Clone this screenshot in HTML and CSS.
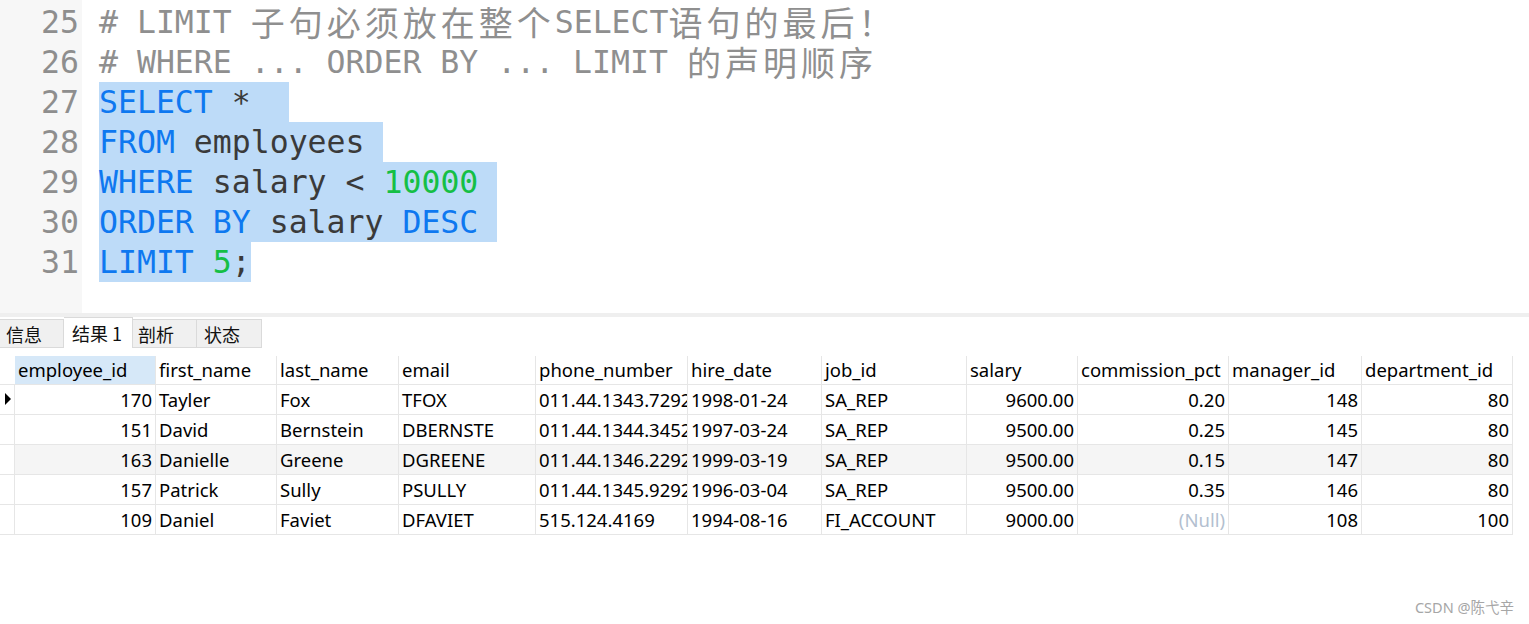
FILE: index.html
```html
<!DOCTYPE html>
<html lang="zh">
<head>
<meta charset="utf-8">
<title>Query result</title>
<link rel="stylesheet" href="styles.css">
</head>
<body>
<div class="page">
  <div class="editor">
    <div class="gutter">
      <div class="ln">25</div>
      <div class="ln">26</div>
      <div class="ln">27</div>
      <div class="ln">28</div>
      <div class="ln">29</div>
      <div class="ln">30</div>
      <div class="ln">31</div>
    </div>
    <div class="code">
      <div class="line cm"># LIMIT <span class="cjk">子句必须放在整个</span>SELECT<span class="cjk">语句的最后！</span></div>
      <div class="line cm"># WHERE ... ORDER BY ... LIMIT <span class="cjk">的声明顺序</span></div>
      <div class="line"><span class="sel"><span class="kw">SELECT</span> *  </span></div>
      <div class="line"><span class="sel"><span class="kw">FROM</span> employees </span></div>
      <div class="line"><span class="sel"><span class="kw">WHERE</span> salary &lt; <span class="num">10000</span> </span></div>
      <div class="line"><span class="sel"><span class="kw">ORDER BY</span> salary <span class="kw">DESC</span> </span></div>
      <div class="line"><span class="sel"><span class="kw">LIMIT</span> <span class="num">5</span>;</span></div>
    </div>
  </div>
  <div class="divider"></div>
  <div class="tabs">
    <div class="tab">信息</div>
    <div class="tab active">结果 1</div>
    <div class="tab">剖析</div>
    <div class="tab">状态</div>
  </div>
  <div class="grid">
    <div class="c g h"></div>
    <div class="c h sorted">employee_id</div>
    <div class="c h">first_name</div>
    <div class="c h">last_name</div>
    <div class="c h">email</div>
    <div class="c h">phone_number</div>
    <div class="c h">hire_date</div>
    <div class="c h">job_id</div>
    <div class="c h">salary</div>
    <div class="c h">commission_pct</div>
    <div class="c h">manager_id</div>
    <div class="c h">department_id</div>

    <div class="c g"><span class="arrow"></span></div>
    <div class="c r">170</div>
    <div class="c">Tayler</div>
    <div class="c">Fox</div>
    <div class="c">TFOX</div>
    <div class="c">011.44.1343.729268</div>
    <div class="c">1998-01-24</div>
    <div class="c">SA_REP</div>
    <div class="c r">9600.00</div>
    <div class="c r">0.20</div>
    <div class="c r">148</div>
    <div class="c r">80</div>

    <div class="c g"></div>
    <div class="c r">151</div>
    <div class="c">David</div>
    <div class="c">Bernstein</div>
    <div class="c">DBERNSTE</div>
    <div class="c">011.44.1344.345268</div>
    <div class="c">1997-03-24</div>
    <div class="c">SA_REP</div>
    <div class="c r">9500.00</div>
    <div class="c r">0.25</div>
    <div class="c r">145</div>
    <div class="c r">80</div>

    <div class="c g"></div>
    <div class="c r alt">163</div>
    <div class="c alt">Danielle</div>
    <div class="c alt">Greene</div>
    <div class="c alt">DGREENE</div>
    <div class="c alt">011.44.1346.229268</div>
    <div class="c alt">1999-03-19</div>
    <div class="c alt">SA_REP</div>
    <div class="c r alt">9500.00</div>
    <div class="c r alt">0.15</div>
    <div class="c r alt">147</div>
    <div class="c r alt">80</div>

    <div class="c g"></div>
    <div class="c r">157</div>
    <div class="c">Patrick</div>
    <div class="c">Sully</div>
    <div class="c">PSULLY</div>
    <div class="c">011.44.1345.929268</div>
    <div class="c">1996-03-04</div>
    <div class="c">SA_REP</div>
    <div class="c r">9500.00</div>
    <div class="c r">0.35</div>
    <div class="c r">146</div>
    <div class="c r">80</div>

    <div class="c g"></div>
    <div class="c r">109</div>
    <div class="c">Daniel</div>
    <div class="c">Faviet</div>
    <div class="c">DFAVIET</div>
    <div class="c">515.124.4169</div>
    <div class="c">1994-08-16</div>
    <div class="c">FI_ACCOUNT</div>
    <div class="c r">9000.00</div>
    <div class="c r null">(Null)</div>
    <div class="c r">108</div>
    <div class="c r">100</div>
  </div>
  <div class="watermark">CSDN @陈弋辛</div>
</div>
</body>
</html>
```

FILE: styles.css
```css
html, body {
  margin: 0;
  padding: 0;
  background: #ffffff;
}

.page {
  position: relative;
  width: 1529px;
  height: 624px;
  overflow: hidden;
}

.editor {
  display: flex;
  height: 313px;
  font-family: "DejaVu Sans Mono", "Noto Sans CJK SC", monospace;
  font-size: 31.5px;
}

.gutter {
  width: 82px;
  background: #f7f7f7;
  padding-top: 2px;
  box-sizing: border-box;
}

.ln {
  height: 40px;
  line-height: 40px;
  text-align: right;
  padding-right: 3px;
  color: #8e8e8e;
}

.code {
  padding-top: 2px;
  padding-left: 17px;
}

.line {
  height: 40px;
  line-height: 40px;
  white-space: pre;
  color: #3a3a3a;
}

.line.cm {
  color: #8f8f8f;
}

.cjk {
  font-family: "Noto Sans CJK SC", sans-serif;
  font-size: 34px;
  line-height: 40px;
  letter-spacing: 4px;
  vertical-align: top;
}

.sel {
  display: inline-block;
  height: 40px;
  background: #bddbf8;
}

.kw {
  color: #0e78f0;
}

.num {
  color: #15bf45;
}

.divider {
  height: 4px;
  background: #efefef;
}

.tabs {
  display: flex;
  align-items: flex-end;
  height: 31px;
  font-family: "Noto Sans CJK SC", sans-serif;
  font-size: 18px;
  color: #111;
}

.tab {
  box-sizing: border-box;
  height: 29px;
  line-height: 28px;
  padding-left: 6px;
  background: #f0f0f0;
  border: 1px solid #dadada;
  border-left: none;
  width: 64px;
}

.tab.active {
  height: 31px;
  line-height: 30px;
  width: 69px;
  padding-left: 8px;
  background: #ffffff;
  border-bottom: none;
}

.tab:nth-child(3) {
  padding-left: 5px;
}

.tab:nth-child(4) {
  width: 65px;
  padding-left: 7px;
}

.grid {
  display: grid;
  grid-template-columns: 15px 141px 121px 122px 137px 152px 134px 145px 111px 151px 133px 151px;
  margin-top: 8px;
  font-family: "Noto Sans", sans-serif;
  font-size: 18.5px;
  color: #000;
}

.c {
  box-sizing: border-box;
  height: 30px;
  line-height: 29px;
  padding: 0 3px;
  border-right: 1px solid #e6e6e6;
  border-bottom: 1px solid #e6e6e6;
  white-space: nowrap;
  overflow: hidden;
}

.c.h {
  height: 29px;
  line-height: 28px;
}

.c.g {
  padding: 0;
  position: relative;
}

.c.h.g {
  border-right: none;
}

.c.sorted {
  background: #d6e8f8;
}

.c.r {
  text-align: right;
}

.c.alt {
  background: #f5f5f5;
}

.c.null {
  color: #b3bfd0;
}

.arrow {
  position: absolute;
  left: 5px;
  top: 8px;
  width: 0;
  height: 0;
  border-top: 6px solid transparent;
  border-bottom: 6px solid transparent;
  border-left: 6px solid #000;
}

.watermark {
  position: absolute;
  right: 15px;
  bottom: 7px;
  font-family: "Noto Sans", "Noto Sans CJK SC", sans-serif;
  font-size: 14.5px;
  color: #a6a6a6;
}
```
